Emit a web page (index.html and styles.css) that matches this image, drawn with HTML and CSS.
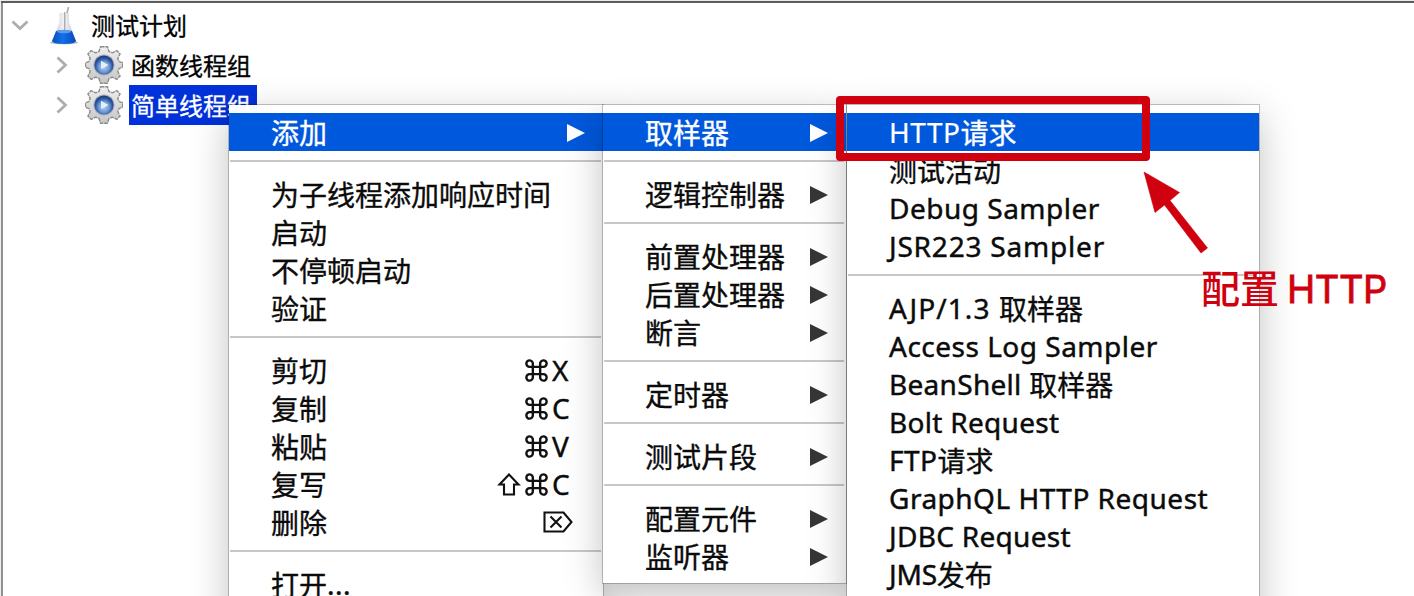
FILE: index.html
```
<!DOCTYPE html>
<html lang="zh-CN">
<head>
<meta charset="utf-8">
<title>测试计划</title>
<link rel="stylesheet" href="styles.css">
</head>
<body>
<svg class="defs" width="0" height="0">
  <defs>
    <linearGradient id="gearFill" x1="0" y1="0" x2="0" y2="1"><stop offset="0" stop-color="#eeeeee"/><stop offset="1" stop-color="#c6c6c6"/></linearGradient>
    <radialGradient id="hubFill" cx=".5" cy=".6" r=".55"><stop offset="0" stop-color="#b4d0f0"/><stop offset=".5" stop-color="#6f9bd4"/><stop offset=".8" stop-color="#2c5aa6"/><stop offset="1" stop-color="#203f7c"/></radialGradient>
    <linearGradient id="glass" x1="0" x2="1"><stop offset="0" stop-color="#c6c9d2"/><stop offset=".5" stop-color="#f2f2f6"/><stop offset="1" stop-color="#c0c4cc"/></linearGradient>
    <linearGradient id="liquid" x1="0" x2="1"><stop offset="0" stop-color="#0d4fb4"/><stop offset=".45" stop-color="#0f70ee"/><stop offset="1" stop-color="#0b48b8"/></linearGradient>
    <symbol id="gear" viewBox="-19 -19 38 38">
      <path d="M-3.500-18.300h7l1.500 4.800 3.300 1.400 4.500-2.300 3.300 3.300-2.300 4.500 1.400 3.300 3.400 1v4.600l-3.400 1-1.400 3.300 2.300 4.500-3.300 3.300-4.500-2.300-3.300 1.400-1.500 4.800h-7l-1.500-4.800-3.300-1.400-4.500 2.300-3.300-3.300 2.300-4.500-1.400-3.300-3.400-1v-4.600l3.400-1 1.400-3.300-2.300-4.500 3.300-3.300 4.500 2.300 3.300-1.400z" fill="url(#gearFill)" stroke="#8c8c8c" stroke-width="1.400" stroke-dasharray="4 .8" stroke-linejoin="round"/>
      <circle r="10.600" fill="#a9aebb"/>
      <circle r="9.600" fill="url(#hubFill)"/>
      <path d="M-3-4.200 4.500 0-3 4.200z" fill="#e6eefa"/>
    </symbol>
    <symbol id="cmd" viewBox="0 0 22 22">
      <path d="M7.500 7.500h7v7h-7zM7.500 7.500V4.600A3.100 3.100 0 1 0 4.400 7.500zM14.500 7.500V4.600a3.100 3.100 0 1 1 3.100 2.900zM7.500 14.500v2.900a3.100 3.100 0 1 1-3.100-2.900zM14.500 14.500v2.900a3.100 3.100 0 1 0 3.100-2.900z" fill="none" stroke="#111" stroke-width="2.300"/>
    </symbol>
  </defs>
</svg>
<main class="window">
  <ul class="tree">
    <li class="node">
      <svg class="chevron" viewBox="0 0 20 20"><path d="M2.500 6.500l7.500 7 7.500-7"/></svg>
      <svg class="node-icon flask" viewBox="0 0 30 40">
        <path d="M18 7l1.500-6" stroke="#aaa" stroke-width="1.500"/>
        <ellipse cx="15" cy="36.500" rx="14" ry="1.800" fill="#8e98a8" opacity=".7"/>
        <path d="M10.500 7h9.500v9l7 20H3.500l7-20z" fill="url(#glass)"/>
        <path d="M7 25q8-2 16 0l4 10q-1 3-12 3T3 35z" fill="url(#liquid)"/>
        <ellipse cx="15" cy="25.500" rx="7" ry="1.800" fill="#5f9ae8"/>
        <path d="M15.800 6v18" stroke="#8c9096"/>
      </svg>
      <span class="label">测试计划</span>
    </li>
    <li class="node child">
      <svg class="chevron" viewBox="0 0 20 20"><path d="M6.500 2.500l8 7.500-8 7.500"/></svg>
      <svg class="node-icon"><use href="#gear"/></svg>
      <span class="label">函数线程组</span>
    </li>
    <li class="node child">
      <svg class="chevron" viewBox="0 0 20 20"><path d="M6.500 2.500l8 7.500-8 7.500"/></svg>
      <svg class="node-icon"><use href="#gear"/></svg>
      <span class="label selected">简单线程组</span>
    </li>
  </ul>

  <ul class="menu menu-main">
    <li class="item active sub">添加</li>
    <li class="sep"></li>
    <li class="item">为子线程添加响应时间</li>
    <li class="item">启动</li>
    <li class="item">不停顿启动</li>
    <li class="item">验证</li>
    <li class="sep"></li>
    <li class="item">剪切<span class="keys"><svg class="cmd"><use href="#cmd"/></svg><kbd>X</kbd></span></li>
    <li class="item">复制<span class="keys"><svg class="cmd"><use href="#cmd"/></svg><kbd>C</kbd></span></li>
    <li class="item">粘贴<span class="keys"><svg class="cmd"><use href="#cmd"/></svg><kbd>V</kbd></span></li>
    <li class="item">复写<span class="keys"><svg class="shift" viewBox="0 0 24 23"><path d="M12 1.500 2.500 11.500H7v10h10v-10h4.500z"/></svg><svg class="cmd"><use href="#cmd"/></svg><kbd>C</kbd></span></li>
    <li class="item">删除<span class="keys del"><svg class="delete" viewBox="0 0 30 22"><path d="M1.500 1.500h19l8 9.500-8 9.500h-19zM7.500 5.500l11 11m0-11-11 11"/></svg></span></li>
    <li class="sep"></li>
    <li class="item">打开<span class="latin">...</span></li>
  </ul>

  <ul class="menu menu-add">
    <li class="item active sub">取样器</li>
    <li class="sep"></li>
    <li class="item sub">逻辑控制器</li>
    <li class="sep"></li>
    <li class="item sub">前置处理器</li>
    <li class="item sub">后置处理器</li>
    <li class="item sub">断言</li>
    <li class="sep"></li>
    <li class="item sub">定时器</li>
    <li class="sep"></li>
    <li class="item sub">测试片段</li>
    <li class="sep"></li>
    <li class="item sub">配置元件</li>
    <li class="item sub">监听器</li>
  </ul>

  <ul class="menu menu-sampler">
    <li class="item active"><span class="latin light">HTTP</span>请求</li>
    <li class="item">测试活动</li>
    <li class="item"><span class="latin">Debug Sampler</span></li>
    <li class="item"><span class="latin wide">JSR223 Sampler</span></li>
    <li class="sep"></li>
    <li class="item"><span class="latin wider">AJP/1.3 </span>取样器</li>
    <li class="item"><span class="latin">Access Log Sampler</span></li>
    <li class="item"><span class="latin snug">BeanShell </span>取样器</li>
    <li class="item"><span class="latin snug">Bolt Request</span></li>
    <li class="item"><span class="latin">FTP</span>请求</li>
    <li class="item"><span class="latin">GraphQL HTTP Request</span></li>
    <li class="item"><span class="latin snug">JDBC Request</span></li>
    <li class="item"><span class="latin tight">JMS</span>发布</li>
  </ul>

  <div class="highlight"></div>
  <svg class="arrow" viewBox="0 0 66 84"><path d="M1 1l35.500 20.500-9.500 8 37.500 47.500-6.500 5L21.500 34 12 41.500z" fill="#d0000f" stroke="#d0000f" stroke-width=".6"/></svg>
  <p class="note"><span class="note-han">配置</span><span class="note-latin">HTTP</span></p>
</main>
</body>
</html>
```
FILE: styles.css
```
* { box-sizing: border-box; }
body {
  margin: 0;
  background: #fff;
  font-family: "Noto Sans CJK SC", sans-serif;
  color: #0b0b0b;
}
ul { list-style: none; margin: 0; padding: 0; }
.defs { position: absolute; }
.window {
  position: relative;
  width: 1414px;
  height: 596px;
  overflow: hidden;
  border: solid transparent;
  border-width: 3px 0 0 3px;
  /* two-tone frame: pale outer pixel, dark inner line */
  background:
    linear-gradient(#fff, #fff) padding-box,
    linear-gradient(#e8ece8, #e8ece8) 0 0 / 100% 1px no-repeat border-box,
    linear-gradient(#ededed, #ededed) 0 0 / 1px 100% no-repeat border-box,
    linear-gradient(#5a5d5a, #5a5d5a) 0 0 / 100% 3px no-repeat border-box,
    linear-gradient(#919191, #919191) border-box;
}
.tree { padding: 2px 0 0 7px; }
.node { display: flex; align-items: center; height: 40px; }
.child { padding-left: 41px; }
.chevron { width: 20px; height: 20px; flex: none; }
.chevron path { fill: none; stroke: #adadad; stroke-width: 2.800; }
.node-icon { width: 38px; height: 38px; margin-left: 14px; flex: none; }
.flask { width: 30px; height: 40px; margin: 2px 0 0 19px; }
.label {
  height: 40px;
  margin-left: 6px;
  padding: 0 6px 0 2px;
  font: 400 24px/40px "Noto Sans CJK SC", sans-serif;
  -webkit-text-stroke: .3px;
  color: #000;
}
.node:first-child .label { margin-left: 10px; }
.selected { background: #0031d9; color: #fff; }

.menu {
  position: absolute;
  top: 102px;
  padding: 8px 0;
  background: rgba(255, 255, 255, .98);
  box-shadow: 0 0 0 1px rgba(0, 0, 0, .22), 0 12px 36px rgba(0, 0, 0, .25);
  font-size: 28px;
}
.menu-main { left: 226px; width: 374px; height: 520px; }
.menu-add { left: 600px; width: 243px; }
.menu-sampler { left: 844px; width: 412px; height: 520px; }
.item {
  display: flex;
  align-items: center;
  height: 38px;
  padding-left: 42px;
  line-height: 38px;
  white-space: pre;
  -webkit-text-stroke: .35px;
}
.active { background: #0058dc; color: #fff; }
.sep { height: 24px; padding: 9px 2px 0 1px; }
.sep::before { content: ""; display: block; height: 2px; background: #c8c8c8; }
.sub::after {
  content: "";
  margin: 1px 18px 0 auto;
  border: solid transparent;
  border-width: 9.500px 0 9.500px 18px;
  border-left-color: #363636;
}
.active.sub::after { border-left-color: #fff; }
.latin {
  font-family: "Noto Sans", sans-serif;
  letter-spacing: .5px;
  -webkit-text-stroke: .45px;
}
.light { -webkit-text-stroke: .2px; }
.snug { letter-spacing: .3px; }
.wide { letter-spacing: .8px; }
.wider { letter-spacing: 1.1px; }
.tight { letter-spacing: -.2px; }
.keys { display: flex; align-items: center; margin-left: auto; padding-right: 31px; }
.keys.del { padding-right: 30px; }
.keys kbd {
  width: 20px;
  margin-left: 4px;
  font: 400 28px/38px "Noto Sans", sans-serif;
  -webkit-text-stroke: .4px;
}
.cmd { width: 23px; height: 23px; }
.shift { width: 24px; height: 23px; margin-right: 4px; }
.delete { width: 30px; height: 22px; }
.shift path, .delete path { fill: none; stroke: #111; stroke-width: 2.100; }

.highlight {
  position: absolute;
  left: 833px;
  top: 93px;
  width: 314px;
  height: 65px;
  border: 8px solid #d0000f;
  border-radius: 4px;
}
.arrow { position: absolute; left: 1140px; top: 168px; width: 66px; height: 84px; }
.note {
  position: absolute;
  left: 1198px;
  top: 255px;
  margin: 0;
  display: flex;
  gap: 8px;
  font: 500 39px/56px "Noto Sans CJK SC", sans-serif;
  color: #d0000f;
}
.note-latin {
  padding-top: 3px;
  font-family: Inter, sans-serif;
  font-weight: 400;
  font-size: 38px;
  letter-spacing: -.4px;
  -webkit-text-stroke: .8px;
}
```
